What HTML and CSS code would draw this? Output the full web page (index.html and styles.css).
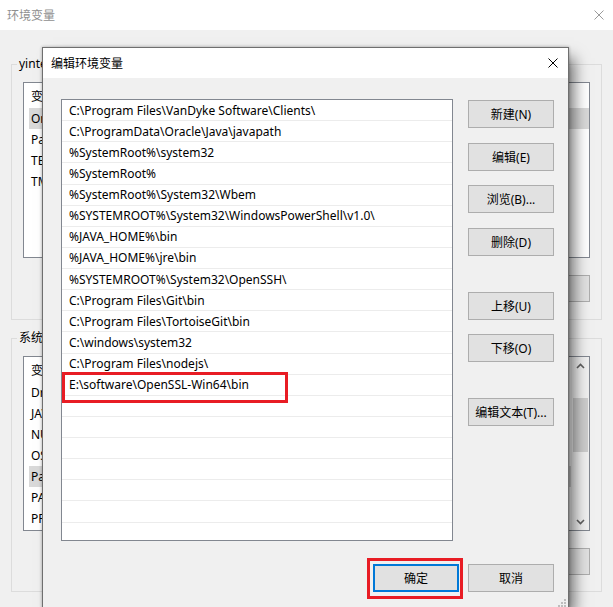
FILE: index.html
```html
<!DOCTYPE html>
<html lang="zh-CN">
<head>
<meta charset="utf-8">
<title>编辑环境变量</title>
<link rel="stylesheet" href="styles.css">
</head>
<body>
<div class="bgwin">
  <div class="bg-title">
    <span>环境变量</span>
    <svg class="x" width="10" height="10" viewBox="0 0 10 10"><path d="M0.5 0.5L9.5 9.5M9.5 0.5L0.5 9.5" stroke="#9a9a9a" stroke-width="1" fill="none"/></svg>
  </div>
  <div class="bg-body">
    <fieldset class="group">
      <legend>yintech 的用户变量(U)</legend>
      <div class="lv">
        <div class="lv-cols">
          <div class="lv-head">变量</div>
          <div class="lv-row sel">OneDrive</div>
          <div class="lv-row">Path</div>
          <div class="lv-row">TEMP</div>
          <div class="lv-row">TMP</div>
        </div>
      </div>
      <div class="gbtns"><span class="gbtn">删除(D)</span></div>
    </fieldset>
    <fieldset class="group g2">
      <legend>系统变量(S)</legend>
      <div class="lv lv2">
        <div class="lv-cols">
          <div class="lv-head">变量</div>
          <div class="lv-row">DriverData</div>
          <div class="lv-row">JAVA_HOME</div>
          <div class="lv-row">NUMBER_OF_PROCESSORS</div>
          <div class="lv-row">OS</div>
          <div class="lv-row sel">Path</div>
          <div class="lv-row">PATHEXT</div>
          <div class="lv-row">PROCESSOR_ARCHITECTURE</div>
        </div>
        <div class="sb">
          <div class="sb-arrow"><svg width="9" height="6" viewBox="0 0 9 6"><path d="M1 5L4.5 1.5L8 5" stroke="#606060" stroke-width="1.6" fill="none"/></svg></div>
          <div class="sb-track"><div class="sb-thumb"></div></div>
          <div class="sb-arrow"><svg width="9" height="6" viewBox="0 0 9 6"><path d="M1 1L4.5 4.5L8 1" stroke="#606060" stroke-width="1.6" fill="none"/></svg></div>
        </div>
      </div>
      <div class="gbtns"><span class="gbtn">删除(L)</span></div>
    </fieldset>
  </div>
</div>

<div class="dlg">
  <div class="dlg-title">
    <span>编辑环境变量</span>
    <svg class="x" width="10" height="10" viewBox="0 0 10 10"><path d="M0.5 0.5L9.5 9.5M9.5 0.5L0.5 9.5" stroke="#000" stroke-width="1" fill="none"/></svg>
  </div>
  <div class="dlg-body">
    <div class="dlg-main">
      <div class="plist">
        <div class="row">C:\Program Files\VanDyke Software\Clients\</div>
        <div class="row">C:\ProgramData\Oracle\Java\javapath</div>
        <div class="row">%SystemRoot%\system32</div>
        <div class="row">%SystemRoot%</div>
        <div class="row">%SystemRoot%\System32\Wbem</div>
        <div class="row">%SYSTEMROOT%\System32\WindowsPowerShell\v1.0\</div>
        <div class="row">%JAVA_HOME%\bin</div>
        <div class="row">%JAVA_HOME%\jre\bin</div>
        <div class="row">%SYSTEMROOT%\System32\OpenSSH\</div>
        <div class="row">C:\Program Files\Git\bin</div>
        <div class="row">C:\Program Files\TortoiseGit\bin</div>
        <div class="row">C:\windows\system32</div>
        <div class="row">C:\Program Files\nodejs\</div>
        <div class="row">E:\software\OpenSSL-Win64\bin</div>
        <div class="row"></div>
        <div class="row"></div>
        <div class="row"></div>
        <div class="row"></div>
        <div class="row"></div>
        <div class="row"></div>
        <div class="row"></div>
        <div class="ann ann-row"></div>
      </div>
      <div class="side">
        <button class="btn b1">新建(N)</button>
        <button class="btn b2">编辑(E)</button>
        <button class="btn b3">浏览(B)...</button>
        <button class="btn b2">删除(D)</button>
        <button class="btn b4">上移(U)</button>
        <button class="btn b3">下移(O)</button>
        <button class="btn b4">编辑文本(T)...</button>
      </div>
    </div>
    <div class="dlg-foot">
      <span class="ok-wrap"><button class="btn ok">确定</button><span class="ann ann-ok"></span></span>
      <button class="btn">取消</button>
    </div>
  </div>
  <svg class="grip" width="8" height="8" viewBox="0 0 8 8" fill="#bdbdbd">
    <rect x="6" y="0" width="2" height="2"/>
    <rect x="3" y="3" width="2" height="2"/><rect x="6" y="3" width="2" height="2"/>
    <rect x="0" y="6" width="2" height="2"/><rect x="3" y="6" width="2" height="2"/><rect x="6" y="6" width="2" height="2"/>
  </svg>
</div>
</body>
</html>
```
FILE: styles.css
```css
* { box-sizing: border-box; }
html, body { margin: 0; padding: 0; }
body {
  width: 613px;
  height: 607px;
  overflow: hidden;
  position: relative;
  background: #f0f0f0;
  font: 12px "Noto Sans", "Noto Sans CJK SC", sans-serif;
  color: #000;
}
.x { display: block; }

/* background window */
.bgwin { height: 607px; display: flex; flex-direction: column; }
.bg-title {
  height: 30px;
  flex: none;
  background: #fff;
  color: #8f8f8f;
  display: flex;
  align-items: center;
  justify-content: space-between;
  padding: 0 9px 0 7px;
}
.bg-body { flex: 1; background: #f0f0f0; }
.group {
  margin: 26px 0 0 11px;
  width: 591px;
  min-width: 0;
  border: 1px solid #dcdcdc;
  padding: 10px 11px 17px;
}
.group.g2 { margin-top: 10px; padding-bottom: 16px; }
.group legend {
  line-height: 16px;
  padding: 0 2px;
  margin-left: -6px;
  color: #000;
}
.lv {
  height: 176px;
  border: 1px solid #828790;
  background: #fff;
  display: flex;
  overflow: hidden;
}
.lv2 { height: 175px; }
.lv-cols { flex: 1; }
.lv-head { height: 25px; display: flex; align-items: center; padding-left: 7px; }
.lv-row { height: 21px; display: flex; align-items: center; margin-left: 5px; padding-left: 2px; }
.lv-row.sel { background: #d9d9d9; }
.sb { width: 18px; display: flex; flex-direction: column; background: #f0f0f0; }
.sb-arrow { height: 17px; display: flex; align-items: center; justify-content: center; }
.sb-track { flex: 1; padding: 24px 1px 0 2px; }
.sb-thumb { height: 54px; background: #cdcdcd; }
.gbtns { display: flex; justify-content: flex-end; margin-top: 17px; }
.gbtn {
  width: 110px;
  height: 27px;
  border: 1px solid #adadad;
  background: #e1e1e1;
  display: flex;
  align-items: center;
  justify-content: center;
}

/* dialog */
.dlg {
  position: absolute;
  left: 42px;
  top: 47px;
  width: 527px;
  height: 563px;
  border: 1px solid #6f6f6f;
  background: #f0f0f0;
  box-shadow: 8px 8px 14px -3px rgba(0,0,0,0.55), 0 0 3px rgba(0,0,0,0.3);
  display: flex;
  flex-direction: column;
}
.dlg-title {
  height: 30px;
  flex: none;
  background: #fff;
  display: flex;
  align-items: center;
  justify-content: space-between;
  padding: 0 10px 0 8px;
}
.dlg-body { flex: 1; padding: 21px 0 0 18px; }
.dlg-main { display: flex; height: 442px; }
.plist {
  width: 392px;
  height: 442px;
  border: 1px solid #828790;
  background: #fff;
  position: relative;
  overflow: hidden;
}
.row {
  height: 21.13px;
  border-bottom: 1px solid #ececec;
  padding-left: 7px;
  display: flex;
  align-items: center;
  white-space: nowrap;
}
.side { margin-left: 15px; width: 86px; display: flex; flex-direction: column; }
.btn {
  width: 86px;
  height: 28px;
  flex: none;
  border: 1px solid #adadad;
  background: #e1e1e1;
  font: inherit;
  color: #000;
  padding: 0;
  margin: 0;
}
.b1 { margin-top: 1px; }
.b2 { margin-top: 15px; }
.b3 { margin-top: 14px; }
.b4 { margin-top: 36px; }
.dlg-foot {
  display: flex;
  justify-content: flex-end;
  gap: 9px;
  margin-top: 23px;
  padding-right: 14px;
}
.ok-wrap { position: relative; display: block; height: 28px; }
.btn.ok { border: 2px solid #0078d7; display: block; }
.ann { position: absolute; border: 3px solid #e81c24; pointer-events: none; }
.ann-row { left: 0; top: 272px; width: 226px; height: 31px; }
.ann-ok { left: -6px; top: -6px; right: -4px; bottom: -7px; }
.grip { position: absolute; right: 2px; bottom: 2px; }
```
